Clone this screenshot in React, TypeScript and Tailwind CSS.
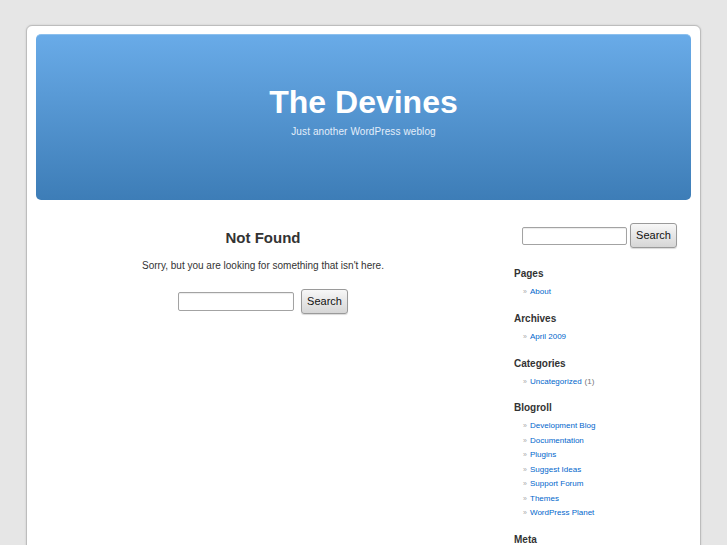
import React from 'react';

const blogroll = [
  'Development Blog',
  'Documentation',
  'Plugins',
  'Suggest Ideas',
  'Support Forum',
  'Themes',
  'WordPress Planet',
];

const SearchForm: React.FC<{ inputWidth: string; inputHeight: string; gap: string }> = ({
  inputWidth,
  inputHeight,
  gap,
}) => (
  <form className={`flex items-center ${gap}`} onSubmit={(e) => e.preventDefault()}>
    <input
      type="text"
      className={`${inputWidth} ${inputHeight} bg-white border border-[#a3a3a3] rounded-[2px] shadow-[inset_0_1px_1px_rgba(0,0,0,0.08)] outline-none`}
    />
    <button
      type="submit"
      className="w-[47px] h-[25px] text-[11px] text-[#111] border border-[#9a9a9a] rounded-[3px] bg-gradient-to-b from-[#f7f7f7] to-[#d6d6d6] shadow-[0_1px_1px_rgba(0,0,0,0.15)]"
    >
      Search
    </button>
  </form>
);

const Section: React.FC<{ title: string; children?: React.ReactNode }> = ({ title, children }) => (
  <div className="mb-[13.25px]">
    <h2 className="text-[10px] leading-[12px] font-bold text-[#333] mb-[5px]">{title}</h2>
    {children && <ul className="pl-[9px]">{children}</ul>}
  </div>
);

const Item: React.FC<{ label: string; extra?: string }> = ({ label, extra }) => (
  <li className="text-[8px] leading-[14.5px] flex items-center">
    <span className="text-[#aaa] w-[7px] text-[7px]">»</span>
    <a href="#" className="text-[#0066cc] no-underline">
      {label}
    </a>
    {extra && <span className="text-[#777] ml-[3px]">{extra}</span>}
  </li>
);

const App: React.FC = () => {
  return (
    <div className="h-[545px] bg-[#e6e6e6] pt-[25px] overflow-hidden font-['Liberation_Sans',Arial,sans-serif]">
      <div className="w-[675px] mx-auto bg-white border border-[#bdbdbd] rounded-t-[6px] shadow-[0_0_2px_rgba(0,0,0,0.15)] px-[9px] pt-[8px] h-[540px] overflow-hidden">
        {/* Header */}
        <div className="h-[166px] rounded-[5px] bg-gradient-to-b from-[#69abe8] to-[#3d7db7] border-t border-[#8cc0ee] flex flex-col items-center">
          <h1 className="mt-[48px] text-[32px] leading-[38px] font-bold text-white">The Devines</h1>
          <p className="mt-[4px] text-[10px] leading-[14px] text-[#e3eefa] tracking-[0.1px]">
            Just another WordPress weblog
          </p>
        </div>

        <div className="flex">
          {/* Main column */}
          <div className="w-[454px] pt-[28px] flex flex-col items-center">
            <h2 className="text-[15px] leading-[20px] font-bold text-[#333]">Not Found</h2>
            <p className="mt-[11px] text-[10px] leading-[14px] text-[#333]">
              Sorry, but you are looking for something that isn't here.
            </p>
            <div className="mt-[16px]">
              <SearchForm inputWidth="w-[116px]" inputHeight="h-[19px]" gap="gap-[7px]" />
            </div>
          </div>

          {/* Sidebar */}
          <div className="w-[176px] ml-[24px] pt-[23px]">
            <div className="pl-[8px]">
              <SearchForm inputWidth="w-[105px]" inputHeight="h-[18px]" gap="gap-[3px]" />
            </div>
            <div className="mt-[20px]">
              <Section title="Pages">
                <Item label="About" />
              </Section>
              <Section title="Archives">
                <Item label="April 2009" />
              </Section>
              <Section title="Categories">
                <Item label="Uncategorized" extra="(1)" />
              </Section>
              <Section title="Blogroll">
                {blogroll.map((b) => (
                  <Item key={b} label={b} />
                ))}
              </Section>
              <Section title="Meta" />
            </div>
          </div>
        </div>
      </div>
    </div>
  );
};

export default App;
